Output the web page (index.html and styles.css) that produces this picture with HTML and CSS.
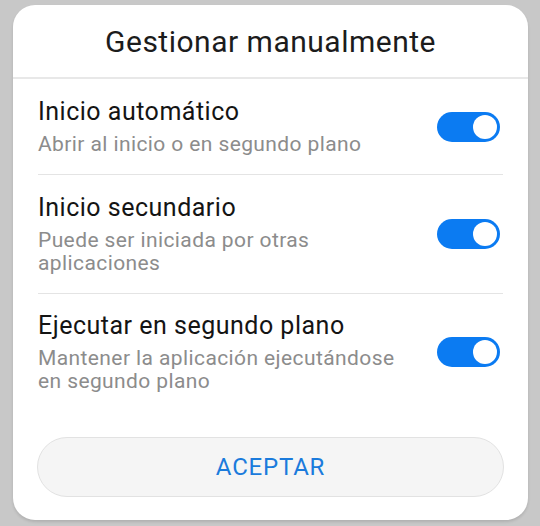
FILE: index.html
```html
<!DOCTYPE html>
<html lang="es">
<head>
<meta charset="utf-8">
<title>Gestionar manualmente</title>
<link rel="stylesheet" href="styles.css">
</head>
<body>
<div class="dialog">
  <div class="dialog-header">Gestionar manualmente</div>
  <ul class="options">
    <li class="option">
      <div class="option-text">
        <div class="option-title">Inicio automático</div>
        <div class="option-sub">Abrir al inicio o en segundo plano</div>
      </div>
      <span class="switch"><span class="knob"></span></span>
    </li>
    <li class="option">
      <div class="option-text">
        <div class="option-title">Inicio secundario</div>
        <div class="option-sub">Puede ser iniciada por otras<br>aplicaciones</div>
      </div>
      <span class="switch"><span class="knob"></span></span>
    </li>
    <li class="option">
      <div class="option-text">
        <div class="option-title">Ejecutar en segundo plano</div>
        <div class="option-sub">Mantener la aplicación ejecutándose<br>en segundo plano</div>
      </div>
      <span class="switch"><span class="knob"></span></span>
    </li>
  </ul>
  <button class="accept">ACEPTAR</button>
</div>
</body>
</html>
```

FILE: styles.css
```css
html, body {
  margin: 0;
  padding: 0;
}
body {
  background: #c8c8c8;
  font-family: Roboto, "Noto Sans", sans-serif;
  width: 540px;
  height: 526px;
  overflow: hidden;
}
.dialog {
  margin: 5px 0 0 13px;
  width: 515px;
  height: 515px;
  background: #ffffff;
  border-radius: 22px;
  box-shadow: 0 2px 3px rgba(0, 0, 0, 0.12);
  box-sizing: border-box;
  display: flex;
  flex-direction: column;
}
.dialog-header {
  height: 74px;
  display: flex;
  align-items: center;
  justify-content: center;
  font-size: 30px;
  letter-spacing: 0.5px;
  color: #1c1c1c;
  border-bottom: 2px solid #e8e8e8;
  box-sizing: border-box;
}
.options {
  list-style: none;
  margin: 0 25px;
  padding: 0;
}
.option {
  display: flex;
  align-items: center;
  justify-content: space-between;
  padding: 18px 0 18px;
  border-bottom: 1px solid #e4e4e4;
}
.option:last-child {
  border-bottom: none;
  padding-top: 17px;
}
.option-title {
  font-size: 25px;
  letter-spacing: 0.5px;
  line-height: 30px;
  color: #141414;
}
.option-sub {
  margin-top: 6px;
  font-size: 21px;
  letter-spacing: 0.4px;
  line-height: 23px;
  color: #8c8c8c;
}
.switch {
  position: relative;
  flex: none;
  width: 63px;
  height: 30px;
  margin-right: 3px;
  border-radius: 15px;
  background: #0b7bf2;
}
.knob {
  position: absolute;
  top: 3px;
  right: 3px;
  width: 24px;
  height: 24px;
  border-radius: 50%;
  background: #ffffff;
}
.accept {
  margin: auto 24px 23px 24px;
  height: 60px;
  border-radius: 30px;
  border: 1px solid #e2e2e2;
  background: #f5f5f5;
  color: #1b7bdc;
  font-family: Roboto, "Noto Sans", sans-serif;
  font-size: 24px;
  letter-spacing: 0.8px;
}
```
